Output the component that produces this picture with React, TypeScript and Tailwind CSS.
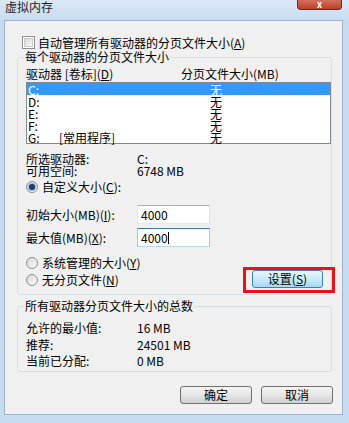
import React from 'react'

const rows = [
  { drive: 'C:', label: '', size: '无', selected: true },
  { drive: 'D:', label: '', size: '无' },
  { drive: 'E:', label: '', size: '无' },
  { drive: 'F:', label: '', size: '无' },
  { drive: 'G:', label: '[常用程序]', size: '无' },
]

function CheckBox() {
  return (
    <div className="w-[13px] h-[13px] border border-[#8e8f8f] bg-white p-[1px]">
      <div className="w-full h-full border border-[#c9c9c9] bg-gradient-to-br from-[#dadada] to-[#f7f7f7]" />
    </div>
  )
}

function Radio({ checked }: { checked?: boolean }) {
  return (
    <div className="w-[12px] h-[12px] rounded-full border border-[#8e8f8f] bg-gradient-to-br from-[#d8d8d8] to-[#fafafa] flex items-center justify-center">
      {checked && (
        <div className="w-[6px] h-[6px] rounded-full bg-[#1c3f6e] ring-1 ring-[#8fb8e6]" />
      )}
    </div>
  )
}

function WinButton({ children, hot }: { children: React.ReactNode; hot?: boolean }) {
  return (
    <div
      className={
        hot
          ? 'w-[71px] h-[18px] rounded-[3px] border border-[#3c7fb1] bg-gradient-to-b from-[#eaf6fd] via-[#c9eafc] to-[#a7d9f5] flex items-center justify-center'
          : 'w-[72px] h-[18px] rounded-[3px] border border-[#707070] bg-gradient-to-b from-[#f4f4f4] via-[#e6e6e6] to-[#d0d0d0] flex items-center justify-center'
      }
    >
      {children}
    </div>
  )
}

export default function App() {
  return (
    <div className="w-[349px] h-[423px] relative overflow-hidden bg-[#c6daf0] text-[12px] leading-[12px] text-black font-['Noto_Sans_CJK_SC','Liberation_Sans',sans-serif]">
      {/* title bar */}
      <div className="h-[20px] bg-gradient-to-b from-[#dbe8f6] to-[#c9dcf1] pl-[5px]">
        <div className="text-[12px] leading-[13px] text-[#1e1e1e]">虚拟内存</div>
      </div>
      <div className="absolute top-0 right-[7px] w-[45px] h-[10px] rounded-b-[4px] border border-t-0 border-[#6e2a20] bg-gradient-to-b from-[#d4705d] to-[#b8402a] flex items-center justify-center">
        <span className="text-white text-[9px] leading-[9px] font-bold">x</span>
      </div>

      {/* client area */}
      <div className="ml-[4px] w-[339px] h-[395px] border border-[#9fb4cc] bg-[#f0f0f0] flex flex-col">
        <div className="mt-[15px] ml-[17px] flex items-center gap-[3px] h-[13px]">
          <CheckBox />
          <span>
            自动管理所有驱动器的分页文件大小(<u>A</u>)
          </span>
        </div>

        <fieldset className="mt-[2px] ml-[12px] w-[315px] h-[244px] border border-[#d5dfe5] rounded-[3px]">
          <legend className="ml-[6px] px-[1px] leading-[12px]">每个驱动器的分页文件大小</legend>
          <div className="pl-[8px] flex flex-col">
            <div className="mt-[5px] flex h-[12px]">
              <span className="w-[155px]">
                驱动器 [卷标](<u>D</u>)
              </span>
              <span>分页文件大小(MB)</span>
            </div>
            <div className="mt-[2px] w-[305px] h-[62px] border border-[#828790] bg-white">
              {rows.map(r => (
                <div
                  key={r.drive}
                  className={
                    'h-[12px] flex items-center leading-[11px] ' +
                    (r.selected ? 'bg-[#3399ff] text-white' : '')
                  }
                >
                  <span className="w-[32px] pl-[1px]">{r.drive}</span>
                  <span className="w-[151px]">{r.label}</span>
                  <span>{r.size}</span>
                </div>
              ))}
            </div>

            <div className="mt-[9px] flex h-[12px]">
              <span className="w-[111px]">所选驱动器:</span>
              <span>C:</span>
            </div>
            <div className="flex h-[12px]">
              <span className="w-[111px]">可用空间:</span>
              <span>6748 MB</span>
            </div>

            <div className="mt-[3px] flex items-center gap-[4px] h-[13px]">
              <Radio checked />
              <span>
                自定义大小(<u>C</u>):
              </span>
            </div>

            <div className="mt-[12px] flex items-center h-[19px]">
              <span className="w-[111px]">
                初始大小(MB)(<u>I</u>):
              </span>
              <div className="w-[73px] h-[19px] border border-[#abadb3] border-l-[#e2e3ea] border-r-[#e2e3ea] border-b-[#e3e9ef] bg-white flex items-center pl-[3px]">
                4000
              </div>
            </div>
            <div className="mt-[4px] flex items-center h-[19px]">
              <span className="w-[111px]">
                最大值(MB)(<u>X</u>):
              </span>
              <div className="w-[73px] h-[19px] border border-[#3d7bad] border-l-[#a4c9e3] border-r-[#a4c9e3] border-b-[#b7d9ed] bg-white flex items-center pl-[3px]">
                4000<span className="w-[1px] h-[12px] bg-black" />
              </div>
            </div>

            <div className="mt-[10px] flex items-center gap-[4px] h-[12px]">
              <Radio />
              <span>
                系统管理的大小(<u>Y</u>)
              </span>
            </div>
            <div className="-mt-[2px] flex items-center h-[26px]">
              <div className="flex items-center gap-[4px]">
                <Radio />
                <span>
                  无分页文件(<u>N</u>)
                </span>
              </div>
              <div className="ml-auto -mr-[4px] w-[92px] h-[26px] border-[3px] border-[#e3151a] pl-[6px] flex items-start">
                <WinButton hot>
                  设置(<u>S</u>)
                </WinButton>
              </div>
            </div>
          </div>
        </fieldset>

        <fieldset className="mt-[5px] ml-[12px] w-[315px] h-[72px] border border-[#d5dfe5] rounded-[3px]">
          <legend className="ml-[6px] px-[1px] leading-[12px]">所有驱动器分页文件大小的总数</legend>
          <div className="pl-[8px] mt-[10px] flex flex-col gap-[4.5px]">
            <div className="flex h-[12px]">
              <span className="w-[111px]">允许的最小值:</span>
              <span>16 MB</span>
            </div>
            <div className="flex h-[12px]">
              <span className="w-[111px]">推荐:</span>
              <span>24501 MB</span>
            </div>
            <div className="flex h-[12px]">
              <span className="w-[111px]">当前已分配:</span>
              <span>0 MB</span>
            </div>
          </div>
        </fieldset>

        <div className="mt-[14px] pr-[9px] flex justify-end gap-[9px]">
          <WinButton>确定</WinButton>
          <WinButton>取消</WinButton>
        </div>
      </div>
    </div>
  )
}
